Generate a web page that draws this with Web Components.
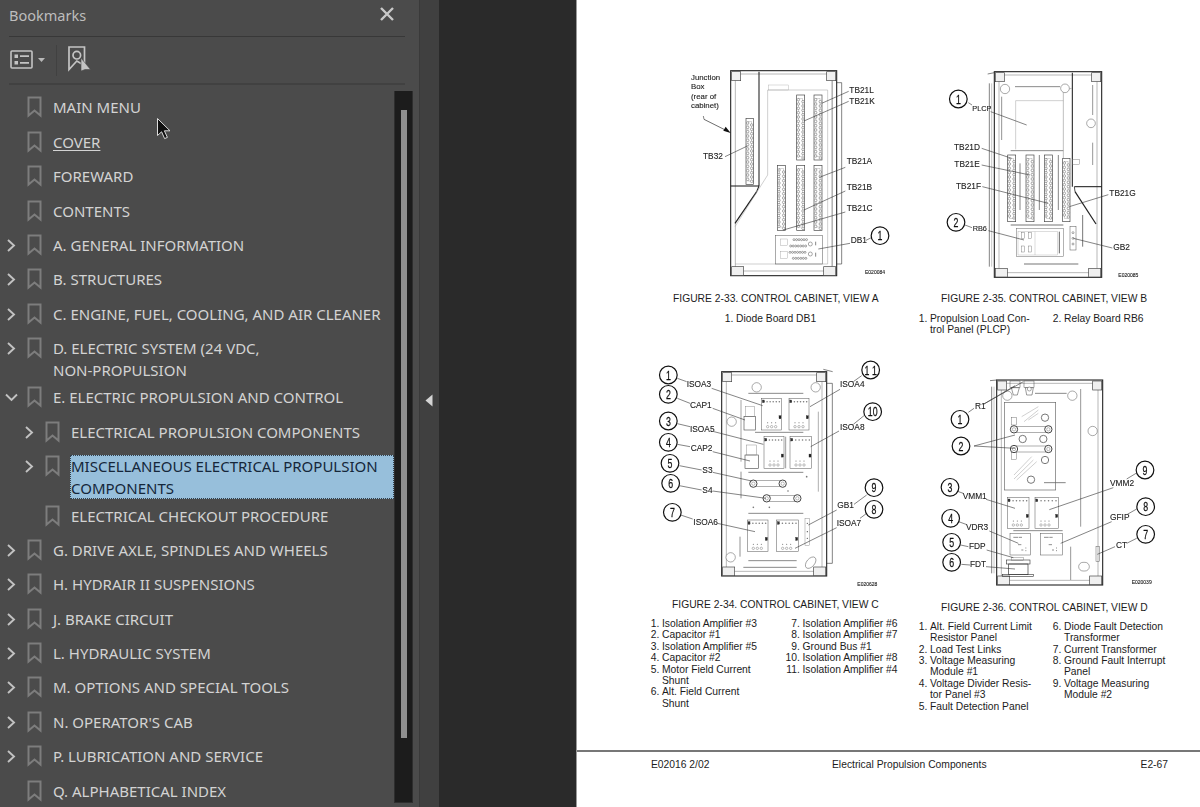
<!DOCTYPE html>
<html lang="en">
<head>
<meta charset="utf-8">
<title>Bookmarks</title>
<style>
  html, body { margin: 0; height: 100%; overflow: hidden; background: #2a2a2a; }
</style>
</head>
<body>

<viewer-app>
  <bookmark-panel slot="panel">
    <bookmark-row>MAIN MENU</bookmark-row>
    <bookmark-row underline>COVER</bookmark-row>
    <bookmark-row>FOREWARD</bookmark-row>
    <bookmark-row>CONTENTS</bookmark-row>
    <bookmark-row expander="right">A. GENERAL INFORMATION</bookmark-row>
    <bookmark-row expander="right">B. STRUCTURES</bookmark-row>
    <bookmark-row expander="right">C. ENGINE, FUEL, COOLING, AND AIR CLEANER</bookmark-row>
    <bookmark-row expander="right" wrapped>D. ELECTRIC SYSTEM (24 VDC,<br>NON-PROPULSION</bookmark-row>
    <bookmark-row expander="down">E. ELECTRIC PROPULSION AND CONTROL</bookmark-row>
    <bookmark-row level="1" expander="right">ELECTRICAL PROPULSION COMPONENTS</bookmark-row>
    <bookmark-row level="1" expander="right" wrapped selected>MISCELLANEOUS ELECTRICAL PROPULSION<br>COMPONENTS</bookmark-row>
    <bookmark-row level="1">ELECTRICAL CHECKOUT PROCEDURE</bookmark-row>
    <bookmark-row expander="right">G. DRIVE AXLE, SPINDLES AND WHEELS</bookmark-row>
    <bookmark-row expander="right">H. HYDRAIR II SUSPENSIONS</bookmark-row>
    <bookmark-row expander="right">J. BRAKE CIRCUIT</bookmark-row>
    <bookmark-row expander="right">L. HYDRAULIC SYSTEM</bookmark-row>
    <bookmark-row expander="right">M. OPTIONS AND SPECIAL TOOLS</bookmark-row>
    <bookmark-row expander="right">N. OPERATOR'S CAB</bookmark-row>
    <bookmark-row expander="right">P. LUBRICATION AND SERVICE</bookmark-row>
    <bookmark-row>Q. ALPHABETICAL INDEX</bookmark-row>
  </bookmark-panel>

  <pdf-page slot="page">
    <div slot="left">
      <cabinet-figure view="A" style="--cap-x:33px;--cap-top:13px;--leg-top:8px">
        <span slot="caption">FIGURE 2-33. CONTROL CABINET, VIEW A</span>
        <legend-col slot="legend" style="margin-left:85px">
          <legend-item n="1.">Diode Board DB1</legend-item>
        </legend-col>
      </cabinet-figure>
      <cabinet-figure view="C" style="--cap-x:32px;--cap-top:4px;--leg-top:7px;--fig-top:30.5px">
        <span slot="caption">FIGURE 2-34. CONTROL CABINET, VIEW C</span>
        <legend-col slot="legend" style="margin-left:11px;width:140.5px">
          <legend-item n="1.">Isolation Amplifier #3</legend-item>
          <legend-item n="2.">Capacitor #1</legend-item>
          <legend-item n="3.">Isolation Amplifier #5</legend-item>
          <legend-item n="4.">Capacitor #2</legend-item>
          <legend-item n="5.">Motor Field Current<br>Shunt</legend-item>
          <legend-item n="6.">Alt. Field Current<br>Shunt</legend-item>
        </legend-col>
        <legend-col slot="legend">
          <legend-item n="7.">Isolation Amplifier #6</legend-item>
          <legend-item n="8.">Isolation Amplifier #7</legend-item>
          <legend-item n="9.">Ground Bus #1</legend-item>
          <legend-item n="10.">Isolation Amplifier #8</legend-item>
          <legend-item n="11.">Isolation Amplifier #4</legend-item>
        </legend-col>
      </cabinet-figure>
    </div>
    <div slot="right">
      <cabinet-figure view="B" style="--cap-x:41px;--cap-top:13px;--leg-top:8px">
        <span slot="caption">FIGURE 2-35. CONTROL CABINET, VIEW B</span>
        <legend-col slot="legend" style="margin-left:19px;width:134px">
          <legend-item n="1.">Propulsion Load Con-<br>trol Panel (PLCP)</legend-item>
        </legend-col>
        <legend-col slot="legend">
          <legend-item n="2.">Relay Board RB6</legend-item>
        </legend-col>
      </cabinet-figure>
      <cabinet-figure view="D" style="--cap-x:41px;--cap-top:7px;--leg-top:7px;--fig-top:29px">
        <span slot="caption">FIGURE 2-36. CONTROL CABINET, VIEW D</span>
        <legend-col slot="legend" style="margin-left:19px;width:134px">
          <legend-item n="1.">Alt. Field Current Limit<br>Resistor Panel</legend-item>
          <legend-item n="2.">Load Test Links</legend-item>
          <legend-item n="3.">Voltage Measuring<br>Module #1</legend-item>
          <legend-item n="4.">Voltage Divider Resis-<br>tor Panel #3</legend-item>
          <legend-item n="5.">Fault Detection Panel</legend-item>
        </legend-col>
        <legend-col slot="legend">
          <legend-item n="6.">Diode Fault Detection<br>Transformer</legend-item>
          <legend-item n="7.">Current Transformer</legend-item>
          <legend-item n="8.">Ground Fault Interrupt<br>Panel</legend-item>
          <legend-item n="9.">Voltage Measuring<br>Module #2</legend-item>
        </legend-col>
      </cabinet-figure>
    </div>
    <span slot="foot-left">E02016 2/02</span>
    <span slot="foot-mid">Electrical Propulsion Components</span>
    <span slot="foot-right">E2-67</span>
  </pdf-page>
</viewer-app>

<script>
class ViewerApp extends HTMLElement {
  connectedCallback() {
    const shadow = this.attachShadow({ mode: 'open' });
    shadow.innerHTML = `
      <style>
        :host { display: flex; height: 807px; width: 1200px; position: relative; overflow: hidden; }
        .strip { width: 20px; background: #404040; border-left: 1px solid #3a3a3a; box-sizing: border-box;
                 display: flex; align-items: center; justify-content: center; }
        .strip svg { margin-top: -7px; margin-left: -2px; }
        .gutter { width: 137px; background: #2a2a2a; border-right: 1px solid #9a9a9a; box-sizing: content-box; }
        .cursor { position: absolute; left: 156px; top: 117px; }
      </style>
      <slot name="panel"></slot>
      <div class="strip"><svg width="8" height="13" viewBox="0 0 8 13"><path d="M7.5 0.5V12.5L0.5 6.5Z" fill="#d4d4d4"/></svg></div>
      <div class="gutter"></div>
      <slot name="page"></slot>
      <svg class="cursor" width="16" height="24" viewBox="0 0 16 24">
        <path d="M1.5 1.5V18.5L5.6 14.8L8.6 21.6L11.4 20.4L8.4 13.8H14Z" fill="#111" stroke="#dcdcdc" stroke-width="1"/>
      </svg>`;
  }
}

class BookmarkPanel extends HTMLElement {
  connectedCallback() {
    const shadow = this.attachShadow({ mode: 'open' });
    shadow.innerHTML = `
      <style>
        :host { display: flex; flex-direction: column; width: 419px; height: 807px; flex: none; box-sizing: border-box;
                background: #4b4b4b; padding-left: 9px; font-family: "Noto Sans", sans-serif; overflow: hidden; }
        header { height: 37px; display: flex; align-items: center; justify-content: space-between;
                 box-sizing: border-box; padding: 0 11px 7px 0; margin-right: 14px; border-bottom: 1px solid #383838; color: #bdbdbd; font-size: 14.5px; }
        header svg { display: block; margin-top: -1px; }
        .tools { height: 48px; margin-right: 14px; box-sizing: border-box; border-bottom: 2px solid #414141;
                 display: flex; align-items: center; }
        .sep { width: 1px; height: 31px; background: #414141; margin: 0 11px 0 10px; }
        .body { flex: 1; display: flex; min-height: 0; margin-left: -9px; }
        .rows { width: 394px; flex: none; padding-top: 5.2px; }
        .track { width: 19px; flex: none; box-sizing: border-box; background: #1c1c1c; border: 1px solid #2e2e2e; border-top: 0; margin: 6px 0 4px;
                 display: flex; justify-content: center; }
        .thumb { width: 6px; height: 628px; margin-top: 19px; background: #8f8f8f; }
      </style>
      <header>
        <span>Bookmarks</span>
        <svg width="14" height="14" viewBox="0 0 14 14"><path d="M1 1L13 13M13 1L1 13" stroke="#c9c9c9" stroke-width="2.4"/></svg>
      </header>
      <div class="tools">
        <svg width="36" height="24" viewBox="0 0 36 24" style="margin-left:1px">
          <rect x="1" y="3" width="21" height="17" rx="1" fill="none" stroke="#c4c4c4" stroke-width="1.6"/>
          <rect x="4.5" y="6.5" width="3.5" height="3.5" fill="#c4c4c4"/>
          <rect x="4.5" y="13" width="3.5" height="3.5" fill="#c4c4c4"/>
          <path d="M10 8.2H19M10 14.8H19" stroke="#c4c4c4" stroke-width="1.8"/>
          <path d="M28 10H35L31.5 14Z" fill="#b8b8b8"/>
        </svg>
        <div class="sep"></div>
        <svg width="23" height="26" viewBox="0 0 23 26" style="margin-top:-2px">
          <path d="M1 1H16.5V19.5L8.8 15L1 23.5Z" fill="none" stroke="#c4c4c4" stroke-width="1.7"/>
          <circle cx="8.8" cy="9.2" r="3.8" fill="none" stroke="#c4c4c4" stroke-width="1.7"/>
          <path d="M13 12L22.5 23.5H17L13 25Z" fill="#c4c4c4" stroke="#4b4b4b" stroke-width=".6"/>
        </svg>
      </div>
      <div class="body">
        <div class="rows"><slot></slot></div>
        <div class="track"><div class="thumb"></div></div>
      </div>`;
  }
}

class BookmarkRow extends HTMLElement {
  connectedCallback() {
    const shadow = this.attachShadow({ mode: 'open' });
    const exp = this.getAttribute('expander');
    let arrow = '';
    if (exp === 'right') arrow = '<path d="M3 1L9 6.5L3 12" />';
    if (exp === 'down') arrow = '<path d="M1 3.5L6.5 9L12 3.5" />';
    const level = Number(this.getAttribute('level') || 0);
    shadow.innerHTML = `
      <style>
        :host { display: block; }
        :host([wrapped]) { margin-bottom: -.8px; }
        .row { display: flex; align-items: flex-start; padding: 6.2px 0 6.2px ${5 + level * 18}px; }
        :host([wrapped]) .row { padding-bottom: 0; }
        .exp { width: 14px; height: 13px; margin-top: 5px; flex: none; fill: none; stroke: #c2c2c2; stroke-width: 1.9; }
        .mark { width: 15px; height: 22px; margin: 0 11px 0 8px; flex: none; fill: none; stroke: #7d7d7d; stroke-width: 2; }
        .label { flex: 1; font-size: 15px; line-height: 22px; color: #d3d3d3; white-space: nowrap; box-sizing: border-box; }
        :host([underline]) .label span { text-decoration: underline; text-underline-offset: 2px; text-decoration-thickness: 1px; }
        :host([selected]) .label { background: #97bfdb; color: #15273a; outline: 1px dotted #33414d; outline-offset: -1px; margin-left: -1px; padding-left: 1px; }
      </style>
      <div class="row">
        <svg class="exp" viewBox="0 0 14 13">${arrow}</svg>
        <svg class="mark" viewBox="0 0 15 22"><path d="M1.5 1.5H13.5V19.5L7.5 14.5L1.5 19.5Z"/></svg>
        <div class="label"><span><slot></slot></span></div>
      </div>`;
  }
}

class PdfPage extends HTMLElement {
  connectedCallback() {
    const shadow = this.attachShadow({ mode: 'open' });
    shadow.innerHTML = `
      <style>
        :host { display: flex; flex-direction: column; flex: 1; height: 807px; background: #fff; color: #1c1c1c;
                font-family: "Liberation Sans", Arial, sans-serif; min-width: 0; }
        .figs { display: flex; height: 750px; flex: none; box-sizing: border-box; padding: 60px 0 0 63px; }
        .figs ::slotted(div) { width: 260px; flex: none; }
        footer { border-top: 2px solid #777; padding: 7px 32px 0 74px; display: flex; font-size: 10.3px; line-height: 12px; }
        .fl { width: 181px; }
        .fr { margin-left: auto; }
      </style>
      <div class="figs"><slot name="left"></slot><slot name="right"></slot></div>
      <footer>
        <div class="fl"><slot name="foot-left"></slot></div>
        <div><slot name="foot-mid"></slot></div>
        <div class="fr"><slot name="foot-right"></slot></div>
      </footer>`;
  }
}

class LegendCol extends HTMLElement {
  connectedCallback() {
    const shadow = this.attachShadow({ mode: 'open' });
    shadow.innerHTML = `<style>:host { display: block; flex: none; }</style><slot></slot>`;
  }
}

class LegendItem extends HTMLElement {
  connectedCallback() {
    const shadow = this.attachShadow({ mode: 'open' });
    shadow.innerHTML = `
      <style>
        :host { display: flex; font-size: 10.3px; line-height: 11.4px; }
        .n { width: 11px; flex: none; display: flex; justify-content: flex-end; box-sizing: border-box; padding-right: 2.6px; white-space: nowrap; }
        .t { white-space: nowrap; }
      </style>
      <span class="n">${this.getAttribute('n')}</span><span class="t"><slot></slot></span>`;
  }
}

// everything in the drawings is in 3x units, read straight off zoomed crops of the page
const line = (a, b, c, d, w = 1.8, col = '#333') => `<path d="M${a} ${b}L${c} ${d}" stroke="${col}" stroke-width="${w}" fill="none"/>`;
const thin = (a, b, c, d) => line(a, b, c, d, 1.4, '#999');
const bar = (a, b, c, d) => line(a, b, c, d, 3, '#8a8a8a');
const box = (x, y, w, h, sw = 1.6, col = '#3a3a3a', fill = 'none') => `<rect x="${x}" y="${y}" width="${w}" height="${h}" fill="${fill}" stroke="${col}" stroke-width="${sw}"/>`;
const ring = (x, y, r, sw = 1.5, col = '#555') => `<circle cx="${x}" cy="${y}" r="${r}" fill="#fff" stroke="${col}" stroke-width="${sw}"/>`;
const label = (x, y, s, size = 25) => `<text x="${x}" y="${y}" font-size="${size}" fill="#222" stroke="#222" stroke-width=".35">${s}</text>`;
const tiny = (x, y, s) => label(x, y, s, 15);
const balloon = (x, y, n) => `<circle cx="${x}" cy="${y}" r="26.5" fill="#fff" stroke="#111" stroke-width="3.6"/>` +
  `<text transform="translate(${x} ${y + 14}) scale(.66 1)" text-anchor="middle" font-size="40" fill="#111" stroke="#111" stroke-width=".8">${n}</text>`;

function strip(x, y, w, h) {
  let out = box(x, y, w, h, 2, '#444');
  out += box(x + 6, y + 10, w - 12, h - 20, 1, '#888', '#fff');
  for (let cy = y + 14; cy < y + h - 10; cy += 13) {
    out += `<circle cx="${x + 5}" cy="${cy}" r="3.8" fill="#fff" stroke="#555" stroke-width="1.4"/>`;
    out += `<circle cx="${x + w - 5}" cy="${cy + 6}" r="3.8" fill="#fff" stroke="#555" stroke-width="1.4"/>`;
  }
  return out;
}

function dots(x, y, n) {
  let out = '';
  for (let i = 0; i < n; i++) out += `<circle cx="${x + i * 7.5}" cy="${y}" r="3" fill="#fff" stroke="#444" stroke-width="1.4"/>`;
  return out;
}

function frame(l, t, r, b) {
  return box(l, t, r - l, b - t, 3.4, '#2a2a2a') +
    line(l + 14, t + 14, l + 14, b - 12, 1.4, '#666') + line(r - 14, t + 14, r - 14, b - 12, 1.4, '#666') +
    line(l + 28, t + 10, r - 28, t + 10, 1.4, '#666') + line(l + 28, b - 14, r - 28, b - 14, 1.4, '#666') +
    box(l + 3, t + 3, 27, 27, 2, '#444', '#f0f0f0') + box(r - 30, t + 3, 27, 27, 2, '#444', '#f0f0f0') +
    box(l + 3, b - 27, 36, 26, 2, '#444', '#f0f0f0') + box(r - 39, b - 27, 36, 26, 2, '#444', '#f0f0f0');
}

function module(x, y, w, h) {
  let out = box(x, y, w, h, 1.5, '#555');
  for (let i = 0; i < 6; i++) out += `<circle cx="${x + 7 + i * (w - 14) / 5}" cy="${y + 10}" r="2.3" fill="#777"/>`;
  out += box(x + 2, y + 5, 6, 8, 1, '#333', '#333');
  out += box(x + w - 8, y + h * .55, 6, 9, 1, '#222', '#222');
  for (let i = 0; i < 3; i++) {
    out += `<circle cx="${x + 18 + i * 12}" cy="${y + h - 10}" r="3.6" fill="#fff" stroke="#666" stroke-width="1.3"/>`;
    out += `<circle cx="${x + 18 + i * 12}" cy="${y + h - 22}" r="1.5" fill="#555"/>`;
  }
  return out;
}

function fuse(x1, x2, y) {
  return box(x1, y - 9, x2 - x1, 18, 1.4, '#555') +
    ring(x1, y, 11, 3, '#444') + ring(x1, y, 5, 1.2) + ring(x2, y, 11, 3, '#444') + ring(x2, y, 5, 1.2);
}

function smallBoard(x, y, w, h) {
  let out = box(x, y, w, h, 1.5, '#555');
  [[10, 12, 14], [26, 12, 10], [24, 34, 10], [34, 50, 6], [46, 44, 3], [46, 52, 3]].forEach(([a, b, c]) => {
    out += line(x + a, y + b, x + a + c, y + b, 2.2, '#666');
  });
  return out;
}

const views = {
  A: [260, 220, () =>
    frame(272, 32, 590, 647) + line(590, 68, 605, 68) + line(605, 68, 605, 612) + line(590, 612, 605, 612) +
    line(577, 60, 577, 620, 1.4, '#777') +
    line(357, 35, 357, 378, 3.2, '#222') + line(272, 378, 357, 378, 3.2, '#222') +
    line(357, 378, 350, 395, 3.2, '#222') + line(350, 395, 285, 490, 3.6, '#222') +
    thin(383, 90, 563, 90) + thin(383, 90, 383, 345) + thin(383, 345, 285, 500) + thin(563, 90, 563, 612) + thin(285, 612, 563, 612) +
    box(385, 75, 60, 15, 1, '#999') +
    strip(318, 175, 22, 198) + strip(470, 105, 24, 195) + strip(522, 105, 24, 195) +
    strip(412, 316, 24, 195) + strip(470, 316, 24, 195) + strip(522, 316, 24, 195) +
    box(407, 527, 140, 85, 1.5, '#555') +
    dots(462, 539, 6) + dots(452, 558, 7) + dots(450, 577, 7) + dots(460, 595, 6) +
    box(422, 537, 20, 20, 1, '#888') + box(422, 575, 20, 20, 1, '#888') +
    ring(511, 552, 6) + ring(511, 582, 6) + line(527, 545, 527, 556) + line(527, 578, 527, 590) +
    label(153, 60, 'Junction', 23.5) + label(153, 88, 'Box', 23.5) + label(153, 117, '(rear of', 23.5) + label(153, 145, 'cabinet)', 23.5) +
    line(190, 168, 192, 178) + line(192, 178, 262, 213, 2, '#222') + '<path d="M272 219L250 212L257 200Z" fill="#111"/>' +
    label(189, 296, 'TB32') + line(255, 290, 322, 258) +
    label(628, 100, 'TB21L') + line(626, 94, 545, 130) +
    label(628, 132, 'TB21K') + line(626, 124, 492, 183) +
    label(620, 312, 'TB21A') + line(616, 322, 538, 352) +
    label(620, 390, 'TB21B') + line(616, 393, 492, 450) +
    label(620, 452, 'TB21C') + line(616, 456, 430, 510) +
    label(632, 549, 'DB1') + line(630, 550, 535, 567) + line(678, 541, 694, 533) +
    balloon(720, 527, '1') + tiny(675, 643, 'E020084')],
  B: [260, 220, () =>
    frame(283, 35, 605, 652) + line(283, 38, 263, 42) + line(268, 70, 268, 620) + line(275, 70, 275, 620, 1.2, '#777') +
    line(517, 38, 517, 380, 3.2, '#222') + line(523, 380, 605, 380, 3.2, '#222') + line(525, 395, 588, 492, 3.6, '#222') + line(523, 380, 525, 395, 2.4, '#222') +
    line(490, 90, 490, 295, 1.4, '#777') + line(490, 90, 515, 85, 1.4, '#777') +
    ring(315, 87, 14) + ring(495, 85, 13) + ring(573, 190, 13) +
    thin(347, 122, 490, 122) + thin(347, 122, 347, 268) + bar(332, 272, 490, 272) + bar(345, 80, 480, 80) +
    line(305, 110, 305, 240, 2.4, '#777') + line(578, 75, 578, 165, 2.6, '#888') + line(578, 248, 578, 315, 2.6, '#888') + line(548, 465, 548, 560, 3, '#777') +
    line(360, 310, 360, 450, 2.4, '#666') + line(418, 285, 418, 450, 2.4, '#666') + line(475, 285, 475, 450, 2.4, '#666') +
    strip(323, 285, 24, 200) + strip(378, 285, 24, 200) + strip(433, 285, 24, 200) + strip(488, 295, 22, 190) +
    box(518, 298, 20, 15, 1.2, '#666') + line(332, 495, 490, 495, 3.4, '#777') +
    box(350, 505, 140, 85, 1.5, '#666') + box(354, 515, 118, 70, 1, '#999') + line(405, 515, 405, 585, 1, '#999') +
    box(365, 518, 9, 18, 1.2, '#666') + box(385, 518, 9, 18, 1.2, '#666') + box(365, 558, 9, 18, 1.2, '#666') + box(385, 558, 9, 18, 1.2, '#666') +
    line(478, 515, 478, 580, 3, '#666') + box(510, 500, 18, 70, 1.5, '#555') + ring(519, 518, 3) + ring(519, 535, 3) + ring(519, 552, 3) +
    line(372, 612, 535, 612, 3.4, '#777') +
    label(217, 152, 'PLCP', 22) + line(272, 155, 380, 195) + line(205, 128, 216, 135) +
    label(162, 270, 'TB21D') + line(245, 265, 335, 295) +
    label(163, 322, 'TB21E') + line(245, 315, 390, 345) +
    label(168, 387, 'TB21F') + line(247, 380, 445, 430) +
    label(628, 408, 'TB21G') + line(625, 404, 508, 440) +
    label(218, 513, 'RB6', 22) + line(265, 512, 372, 540) + line(195, 495, 216, 503) +
    label(640, 570, 'GB2') + line(637, 564, 520, 535) +
    balloon(175, 117, '1') + balloon(168, 487, '2') + tiny(655, 650, 'E020085')],
  C: [260, 240, () =>
    frame(245, 50, 560, 663) + line(560, 85, 577, 85) + line(577, 85, 577, 625) + line(560, 625, 577, 625) + line(550, 43, 578, 50) +
    ring(350, 97, 14) + ring(527, 97, 14) + ring(275, 200, 14) + ring(272, 607, 14) +
    '<ellipse cx="512" cy="623" rx="12" ry="20" transform="rotate(40 512 623)" fill="#fff" stroke="#555" stroke-width="1.5"/>' +
    bar(325, 115, 490, 115) + bar(345, 232, 490, 232) + bar(325, 352, 490, 352) + bar(325, 475, 490, 475) + bar(325, 617, 470, 617) + bar(310, 637, 470, 637) +
    line(303, 135, 303, 320, 2, '#777') + line(303, 350, 303, 430, 2.4, '#777') + line(437, 245, 437, 340, 2.2, '#777') + line(535, 170, 535, 410, 2, '#888') + line(300, 545, 300, 605, 2.4, '#777') +
    module(365, 130, 60, 95) + module(447, 130, 60, 95) + module(372, 245, 60, 95) + module(450, 245, 65, 95) + module(322, 495, 62, 95) + module(410, 495, 65, 95) +
    box(312, 185, 35, 40, 1.8, '#444') + box(316, 155, 28, 30, 1.2, '#777') + box(315, 300, 40, 40, 1.8, '#444') + box(320, 270, 30, 30, 1.2, '#777') +
    fuse(340, 428, 386) + fuse(380, 472, 430) +
    '<circle cx="444" cy="408" r="2.5" fill="#777"/><circle cx="500" cy="365" r="2.5" fill="#777"/><circle cx="340" cy="457" r="2.5" fill="#777"/><circle cx="388" cy="457" r="2.5" fill="#777"/>' +
    box(495, 490, 14, 82, 1.2, '#777') + '<circle cx="502" cy="505" r="2" fill="#555"/><circle cx="502" cy="530" r="2" fill="#555"/><circle cx="502" cy="550" r="2" fill="#555"/>' +
    label(140, 97, 'ISOA3') + line(112, 70, 140, 80) + line(215, 100, 368, 152) +
    label(150, 160, 'CAP1') + line(112, 130, 150, 145) + line(218, 160, 315, 195) +
    label(150, 232, 'ISOA5') + line(112, 206, 150, 215) + line(222, 230, 370, 268) +
    label(152, 288, 'CAP2') + line(112, 268, 150, 275) + line(218, 290, 330, 318) +
    label(187, 355, 'S3') + line(118, 332, 185, 345) + line(218, 352, 335, 378) +
    label(187, 414, 'S4') + line(118, 392, 185, 405) + line(218, 408, 378, 430) +
    label(160, 509, 'ISOA6') + line(122, 480, 158, 492) + line(232, 505, 345, 530) +
    label(600, 96, 'ISOA4') + line(665, 62, 640, 80) + line(600, 103, 510, 155) +
    label(600, 226, 'ISOA8') + line(672, 182, 640, 208) + line(597, 228, 512, 275) +
    label(592, 460, 'GB1') + line(680, 420, 642, 448) + line(590, 465, 505, 510) +
    label(590, 512, 'ISOA7') + line(680, 475, 660, 490) + line(590, 518, 465, 580) +
    balloon(85, 60, '1') + balloon(85, 118, '2') + balloon(85, 198, '3') + balloon(85, 262, '4') + balloon(90, 325, '5') + balloon(92, 385, '6') + balloon(97, 472, '7') +
    balloon(692, 45, '1 1') + balloon(698, 170, '10') + balloon(702, 398, '9') + balloon(702, 463, '8') + tiny(652, 694, 'E020628')],
  D: [260, 230, () =>
    frame(290, 45, 608, 660) + line(290, 45, 270, 47) + line(275, 65, 275, 625) + line(282, 65, 282, 625, 1.2, '#777') +
    ring(322, 92, 14) + ring(517, 92, 14) + ring(578, 198, 14) +
    box(330, 48, 30, 20, 1.4, '#444') + '<path d="M334 68L340 90H352L358 68Z" fill="#fff" stroke="#444" stroke-width="1.6"/>' +
    box(372, 48, 30, 20, 1.4, '#444') + '<path d="M376 68L380 90H396L400 68Z" fill="#fff" stroke="#444" stroke-width="1.6"/>' + ring(388, 72, 6) +
    bar(405, 85, 500, 85) + line(542, 72, 542, 485, 2.6, '#888') + line(512, 545, 512, 645, 2.6, '#888') +
    box(313, 112, 154, 263, 2, '#666') +
    [[365,155,415,125],[372,170,415,135],[385,165,415,145]].map(p => thin(...p)).join('') +
    [[342,330,395,275],[342,342,400,285],[350,345,410,290]].map(p => thin(...p)).join('') +
    box(335, 158, 14, 22, 1.2, '#555') + box(335, 262, 14, 22, 1.2, '#555') +
    fuse(342, 445, 193) + fuse(342, 445, 252) +
    ring(435, 158, 11, 3, '#777') + ring(368, 222, 11, 3, '#777') + ring(430, 222, 11, 3, '#777') + ring(435, 285, 11, 3, '#777') + ring(393, 344, 11, 3, '#777') +
    line(432, 353, 497, 353, 2.4, '#666') +
    module(322, 397, 65, 93) + module(405, 397, 70, 93) + line(340, 497, 488, 497, 2.6, '#777') +
    smallBoard(330, 505, 62, 65) + smallBoard(422, 505, 65, 65) +
    '<rect x="536" y="592" width="32" height="26" rx="13" fill="#fff" stroke="#555" stroke-width="1.5"/>' +
    box(588, 545, 10, 45, 1.4, '#555') +
    box(320, 585, 70, 12, 1.8, '#333') + box(335, 578, 36, 8, 1.2, '#666') + box(326, 597, 58, 32, 2, '#333') + box(308, 628, 92, 6, 1.8, '#333') +
    label(225, 132, 'R1') + line(205, 142, 222, 130) + line(250, 118, 370, 50) + line(250, 118, 345, 62) +
    line(222, 243, 345, 210) + line(222, 243, 345, 250) +
    label(188, 403, 'VMM1') + line(170, 378, 190, 385) + line(258, 403, 345, 430) +
    label(198, 495, 'VDR3') + line(176, 470, 198, 478) + line(268, 498, 355, 535) +
    label(207, 552, 'FDP') + line(182, 540, 205, 545) + line(260, 555, 340, 578) +
    label(210, 607, 'FDT') + line(184, 598, 210, 600) + line(258, 605, 345, 612) +
    label(630, 362, 'VMM2') + line(708, 325, 680, 342) + line(640, 368, 448, 434) +
    label(630, 465, 'GFIP') + line(710, 432, 682, 448) + line(635, 470, 482, 535) +
    label(648, 548, 'CT') + line(710, 520, 680, 535) + line(645, 545, 592, 568) +
    balloon(180, 163, '1') + balloon(183, 243, '2') + balloon(150, 367, '3') + balloon(152, 460, '4') + balloon(155, 532, '5') + balloon(155, 592, '6') +
    balloon(735, 315, '9') + balloon(737, 425, '8') + balloon(737, 508, '7') + tiny(695, 657, 'E020039')]
};

class CabinetFigure extends HTMLElement {
  connectedCallback() {
    const shadow = this.attachShadow({ mode: 'open' });
    const [w, h, draw] = views[this.getAttribute('view')];
    shadow.innerHTML = `
      <style>
        :host { display: block; margin-top: var(--fig-top, 0); }
        svg { display: block; filter: blur(.3px); font-family: "Liberation Sans", Arial, sans-serif; }
        .cap { margin: var(--cap-top) 0 0 var(--cap-x); font-size: 10.3px; line-height: 12px; white-space: nowrap; }
        .leg { display: flex; margin-top: var(--leg-top); }
      </style>
      <svg width="${w}" height="${h}" viewBox="0 0 ${w * 3} ${h * 3}">${draw()}</svg>
      <div class="cap"><slot name="caption"></slot></div>
      <div class="leg"><slot name="legend"></slot></div>`;
  }
}

customElements.define('viewer-app', ViewerApp);
customElements.define('bookmark-panel', BookmarkPanel);
customElements.define('bookmark-row', BookmarkRow);
customElements.define('pdf-page', PdfPage);
customElements.define('legend-col', LegendCol);
customElements.define('legend-item', LegendItem);
customElements.define('cabinet-figure', CabinetFigure);
</script>
</body>
</html>
